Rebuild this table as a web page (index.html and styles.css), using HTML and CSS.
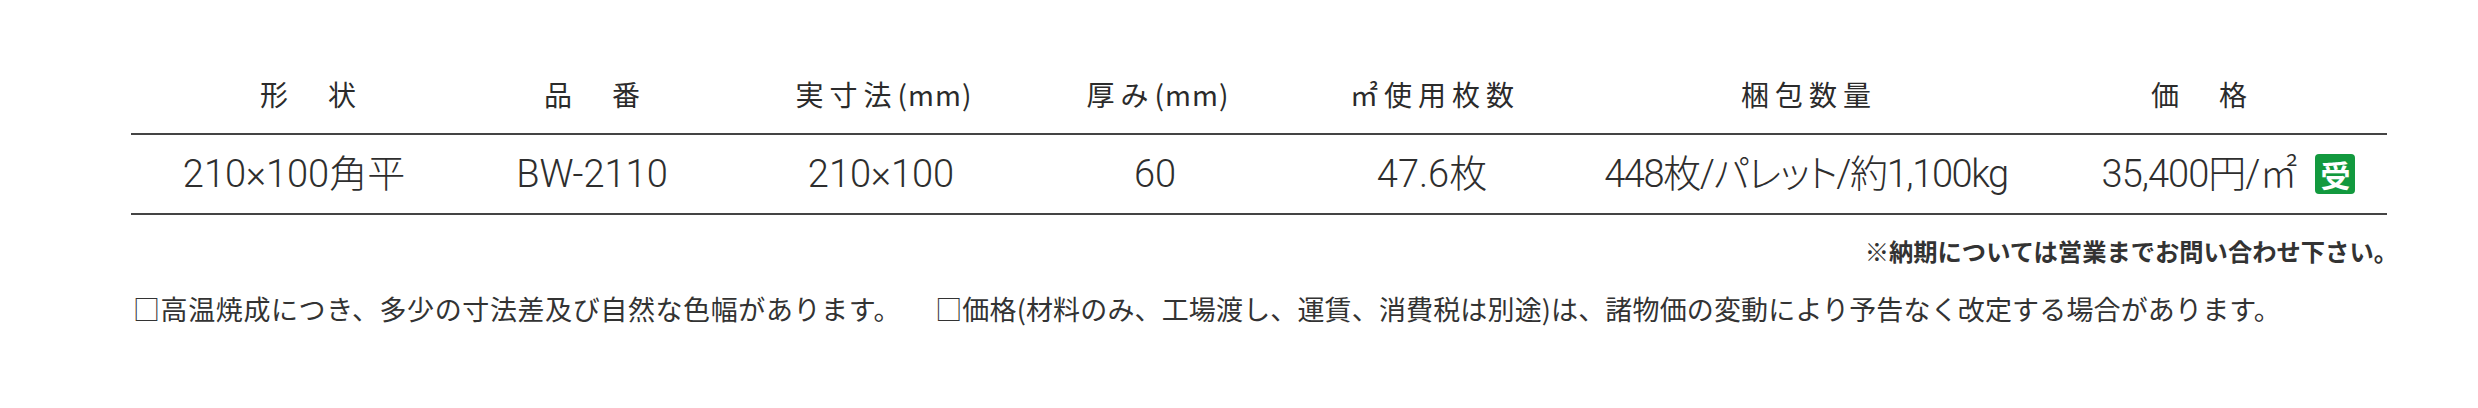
FILE: index.html
```html
<!DOCTYPE html>
<html lang="ja">
<head>
<meta charset="utf-8">
<title>商品仕様</title>
<link rel="stylesheet" href="styles.css">
</head>
<body>
<div class="wrap">
  <div class="spec">
    <div class="row head">
      <div class="cell">形　状</div>
      <div class="cell">品　番</div>
      <div class="cell">実寸法<span class="unit">(mm)</span></div>
      <div class="cell">厚み<span class="unit">(mm)</span></div>
      <div class="cell">㎡使用枚数</div>
      <div class="cell">梱包数量</div>
      <div class="cell last">価　格</div>
    </div>
    <div class="row data">
      <div class="cell first">210×100角平</div>
      <div class="cell">BW-2110</div>
      <div class="cell">210×100</div>
      <div class="cell">60</div>
      <div class="cell">47.6枚</div>
      <div class="cell tight">448枚/パレット/約1,100kg</div>
      <div class="cell last"><span class="price">35,400円/㎡<span class="badge">受</span></span></div>
    </div>
  </div>
  <p class="note">※納期については営業までお問い合わせ下さい。</p>
  <div class="remarks">
    <span class="r1">□高温焼成につき、多少の寸法差及び自然な色幅があります。</span>
    <span class="r2">□価格(材料のみ、工場渡し、運賃、消費税は別途)は、諸物価の変動により予告なく改定する場合があります。</span>
  </div>
</div>
</body>
</html>
```
FILE: styles.css
```css
html, body {
  margin: 0;
  padding: 0;
  background: #fff;
}
body {
  font-family: "Noto Sans CJK JP", "Noto Sans", sans-serif;
  color: #333;
}
.wrap {
  padding: 55px 91px 0 131px;
}
.row {
  display: grid;
  grid-template-columns: 354px 214px 364px 184px 370px 378px 392px;
  border-bottom: 2px solid #444;
}
.cell {
  display: flex;
  align-items: center;
  justify-content: center;
  white-space: nowrap;
}
.cell.last {
  padding-left: 16px;
}
.head {
  height: 80px;
  box-sizing: border-box;
}
.head .cell {
  font-size: 28px;
  font-weight: 400;
  letter-spacing: 6px;
  padding-left: 6px;
  line-height: 1;
  color: #2b2b2b;
}
.head .cell.last {
  padding-left: 22px;
}
.head .unit {
  letter-spacing: 1px;
}
.data {
  height: 80px;
  box-sizing: border-box;
}
.data .cell {
  font-family: "Roboto", "Noto Sans CJK JP", sans-serif;
  font-weight: 300;
  font-feature-settings: "palt";
  font-size: 38px;
  line-height: 1;
  color: #2e2e2e;
}
.data .first {
  padding-right: 28px;
}
.data .tight {
  letter-spacing: -1.4px;
}
.price {
  position: relative;
  letter-spacing: -1px;
}
.badge {
  position: absolute;
  left: calc(100% + 19px);
  top: 50%;
  transform: translateY(-50%);
  width: 40px;
  height: 40px;
  border-radius: 4px;
  background: #12993e;
  color: #fff;
  font-family: "Noto Sans CJK JP", sans-serif;
  font-weight: 700;
  font-size: 30px;
  line-height: 40px;
  text-align: center;
  letter-spacing: 0;
}
.note {
  margin: 18px -11px 0 0;
  text-align: right;
  font-size: 24.3px;
  font-weight: 700;
  line-height: 36px;
  color: #333;
}
.remarks {
  display: flex;
  gap: 34px;
  margin-top: 22px;
  padding-left: 2px;
  font-size: 27px;
  line-height: 36px;
  color: #333;
}
.r1 {
  letter-spacing: 0.6px;
}
.r2 {
  letter-spacing: 0.15px;
}
```
